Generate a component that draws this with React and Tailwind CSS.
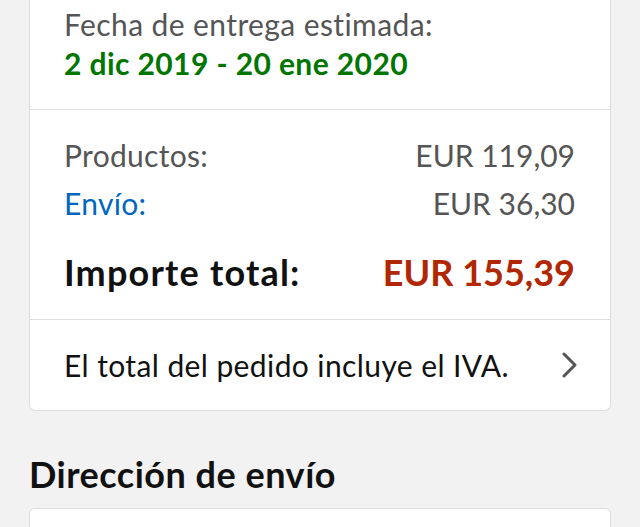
import React from 'react';

const font = { fontFamily: 'Lato, "Noto Sans", sans-serif' };

function Row({ label, value, labelClass, valueClass }) {
  return (
    <div className="flex justify-between items-center">
      <span className={labelClass}>{label}</span>
      <span className={valueClass}>{value}</span>
    </div>
  );
}

export default function App() {
  return (
    <div className="w-full h-[527px] overflow-hidden bg-[#f2f2f2] px-[29px]" style={font}>
      {/* Order summary card */}
      <div className="bg-white border-x border-b border-[#dddddd] rounded-b-[6px]">
        {/* Delivery estimate */}
        <div className="h-[110px] border-b border-[#dddddd] pl-[34px] pt-[5px]">
          <p className="text-[30px] leading-[39px] tracking-[0.4px] text-[#555555]">Fecha de entrega estimada:</p>
          <p className="text-[30px] leading-[39px] tracking-[0.4px] font-bold text-[#007600]">2 dic 2019 - 20 ene 2020</p>
        </div>

        {/* Totals */}
        <div className="h-[210px] border-b border-[#dddddd] pl-[34px] pr-[35px] pt-[21px]">
          <Row
            label="Productos:"
            value="EUR 119,09"
            labelClass="text-[30px] leading-[48px] tracking-[0.3px] text-[#555555]"
            valueClass="text-[30px] leading-[48px] text-[#555555]"
          />
          <Row
            label="Envío:"
            value="EUR 36,30"
            labelClass="text-[30px] leading-[48px] tracking-[0.3px] text-[#0066c0]"
            valueClass="text-[30px] leading-[48px] text-[#555555]"
          />
          <div className="mt-[21px]">
            <Row
              label="Importe total:"
              value="EUR 155,39"
              labelClass="text-[36px] leading-[48px] tracking-[1.2px] font-bold text-[#111111]"
              valueClass="text-[36px] leading-[48px] font-bold text-[#b12704]"
            />
          </div>
        </div>

        {/* VAT note */}
        <div className="h-[90px] flex items-center justify-between pl-[34px] pr-[33px]">
          <span className="text-[30px] leading-[36px] tracking-[0.4px] text-[#111111]">El total del pedido incluye el IVA.</span>
          <svg width="15" height="26" viewBox="0 0 15 26" fill="none" className="mb-[1px]">
            <polyline points="2,2 13,13 2,24" stroke="#555555" strokeWidth="3" strokeLinecap="round" strokeLinejoin="round" />
          </svg>
        </div>
      </div>

      {/* Shipping address */}
      <h2 className="mt-[43px] text-[36px] leading-[40px] tracking-[0.5px] font-bold text-[#111111]">Dirección de envío</h2>
      <div className="mt-[14px] h-[60px] bg-white border border-[#dddddd] rounded-t-[6px]" />
    </div>
  );
}
